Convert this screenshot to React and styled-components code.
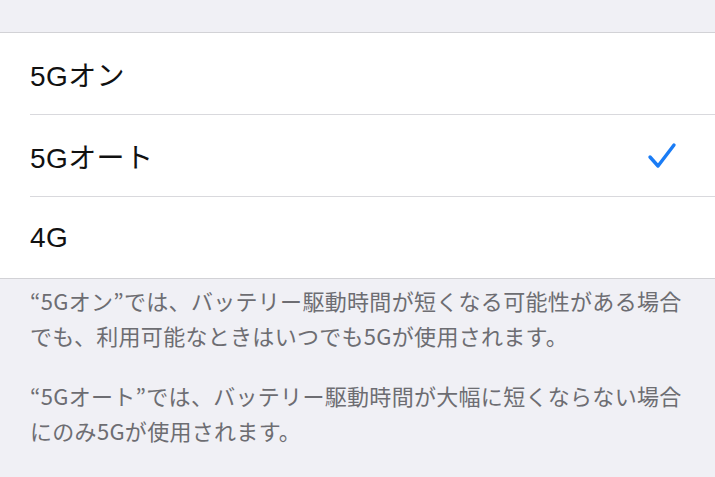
import styled, { createGlobalStyle } from "styled-components";

const GlobalStyle = createGlobalStyle`
  html, body {
    margin: 0;
    padding: 0;
    background: #f0f0f5;
  }
  body {
    font-family: "Noto Sans CJK JP", "Liberation Sans", sans-serif;
  }
`;

const Page = styled.div`
  width: 715px;
  height: 477px;
  overflow: hidden;
  background: #f0f0f5;
  padding-top: 32px;
  box-sizing: border-box;
`;

const Group = styled.div`
  background: #fff;
  border-top: 1px solid #d2d2d6;
  border-bottom: 1px solid #d2d2d6;
`;

const Row = styled.div`
  display: flex;
  align-items: center;
  justify-content: space-between;
  height: 81px;
  margin-left: 30px;
  padding-right: 38px;
  border-bottom: ${(p) => (p.last ? "none" : "1px solid #d9d9dd")};
`;

const Label = styled.span`
  font-family: "Liberation Sans", "Noto Sans CJK JP", sans-serif;
  font-size: 28px;
  font-weight: 400;
  color: #111;
  letter-spacing: 0.4px;
`;

const Footer = styled.div`
  padding: 4px 18px 0 30px;
  color: #6d6d72;
  font-size: 22px;
  line-height: 35px;
`;

const Note = styled.p`
  margin: 0 0 25px 0;
  letter-spacing: 0.3px;
`;

const Check = () => (
  <svg width="30" height="28" viewBox="0 0 30 28">
    <path
      d="M3 15 L11 24 L27 3"
      fill="none"
      stroke="#1a7cf5"
      strokeWidth="3.4"
      strokeLinecap="round"
      strokeLinejoin="round"
    />
  </svg>
);

const options = [
  { label: "5Gオン" },
  { label: "5Gオート", checked: true },
  { label: "4G" },
];

export default function App() {
  return (
    <Page>
      <GlobalStyle />
      <Group>
        {options.map((o, i) => (
          <Row key={o.label} last={i === options.length - 1}>
            <Label>{o.label}</Label>
            {o.checked && <Check />}
          </Row>
        ))}
      </Group>
      <Footer>
        <Note>
          “5Gオン”では、バッテリー駆動時間が短くなる可能性がある場合でも、利用可能なときはいつでも5Gが使用されます。
        </Note>
        <Note>
          “5Gオート”では、バッテリー駆動時間が大幅に短くならない場合にのみ5Gが使用されます。
        </Note>
      </Footer>
    </Page>
  );
}
